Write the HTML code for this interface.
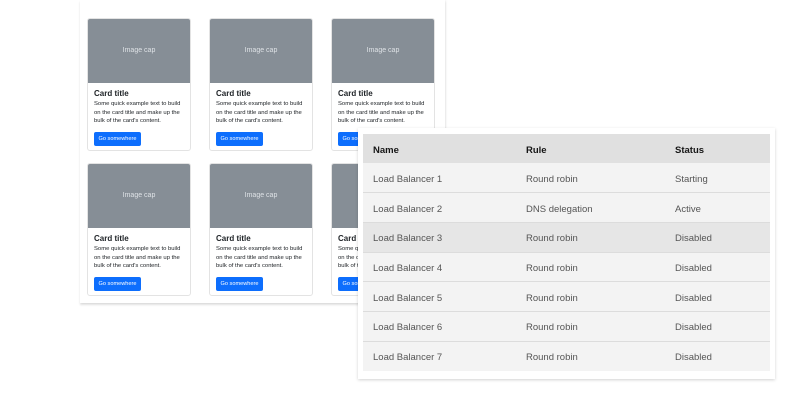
<!DOCTYPE html>
<html><head><style>
*{margin:0;padding:0;box-sizing:border-box}
body{width:800px;height:405px;background:#fff;position:relative;overflow:hidden;font-family:"Liberation Sans",sans-serif}
.lp{position:absolute;left:80px;top:0;width:365px;height:303px;background:#fff;box-shadow:0 2px 2px rgba(0,0,0,.12),1px 0 2px rgba(0,0,0,.06)}
.card{position:absolute;width:104px;height:133px;border:1px solid #e3e3e3;border-radius:3px;background:#fff;overflow:hidden}
.img{height:64px;background:#868e96;color:#dee2e6;font-size:7px;text-align:center;line-height:64px}
.t{position:absolute;left:6px;top:70px;font-size:8px;font-weight:bold;color:#212529}
.x{position:absolute;left:6px;top:81px;width:90px;font-size:5.9px;line-height:8.7px;color:#212529;white-space:nowrap}
.b{position:absolute;left:6px;top:113px;width:47px;height:14px;background:#0d6efd;border-radius:2px;color:#fff;font-size:5.6px;line-height:14px;text-align:center}
.tp{position:absolute;left:358px;top:128px;width:417px;height:251px;background:#fff;box-shadow:0 1px 3px rgba(0,0,0,.18)}
table{position:absolute;left:5px;top:6px;width:407px;border-collapse:collapse;font-size:9.5px;color:#555}
td,th{height:29.7px;text-align:left;padding-left:10px;padding-top:3px;border-bottom:1px solid #dcdcdc;background:#f3f3f3;font-weight:normal}
th{background:#e0e0e0;color:#161616;font-weight:bold;border:none;height:29px}
tr.h td{background:#e6e6e6}
tr:last-child td{border:none}
</style></head><body>
<div class="lp">
<div class="card" style="left:7px;top:18px"><div class="img">Image cap</div><div class="t">Card title</div><div class="x">Some quick example text to build<br>on the card title and make up the<br>bulk of the card's content.</div><div class="b">Go somewhere</div></div>
<div class="card" style="left:129px;top:18px"><div class="img">Image cap</div><div class="t">Card title</div><div class="x">Some quick example text to build<br>on the card title and make up the<br>bulk of the card's content.</div><div class="b">Go somewhere</div></div>
<div class="card" style="left:251px;top:18px"><div class="img">Image cap</div><div class="t">Card title</div><div class="x">Some quick example text to build<br>on the card title and make up the<br>bulk of the card's content.</div><div class="b">Go somewhere</div></div>
<div class="card" style="left:7px;top:163px"><div class="img">Image cap</div><div class="t">Card title</div><div class="x">Some quick example text to build<br>on the card title and make up the<br>bulk of the card's content.</div><div class="b">Go somewhere</div></div>
<div class="card" style="left:129px;top:163px"><div class="img">Image cap</div><div class="t">Card title</div><div class="x">Some quick example text to build<br>on the card title and make up the<br>bulk of the card's content.</div><div class="b">Go somewhere</div></div>
<div class="card" style="left:251px;top:163px"><div class="img">Image cap</div><div class="t">Card title</div><div class="x">Some quick example text to build<br>on the card title and make up the<br>bulk of the card's content.</div><div class="b">Go somewhere</div></div>
</div>
<div class="tp"><table>
<tr><th style="width:153px">Name</th><th style="width:149px">Rule</th><th>Status</th></tr>
<tr><td>Load Balancer 1</td><td>Round robin</td><td>Starting</td></tr>
<tr><td>Load Balancer 2</td><td>DNS delegation</td><td>Active</td></tr>
<tr class="h"><td>Load Balancer 3</td><td>Round robin</td><td>Disabled</td></tr>
<tr><td>Load Balancer 4</td><td>Round robin</td><td>Disabled</td></tr>
<tr><td>Load Balancer 5</td><td>Round robin</td><td>Disabled</td></tr>
<tr><td>Load Balancer 6</td><td>Round robin</td><td>Disabled</td></tr>
<tr><td>Load Balancer 7</td><td>Round robin</td><td>Disabled</td></tr>
</table></div>
</body></html>
